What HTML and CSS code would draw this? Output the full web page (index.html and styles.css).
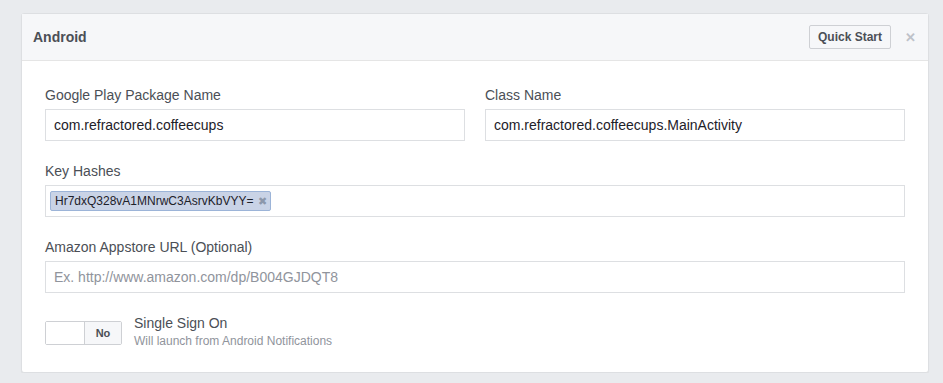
FILE: index.html
```html
<!DOCTYPE html>
<html lang="en">
<head>
  <meta charset="UTF-8" />
  <title>Android Settings</title>
  <link rel="stylesheet" href="styles.css">
</head>
<body>

  <div class="panel">
    <!-- Panel header -->
    <div class="panel-head">
      <h2>Android</h2>
      <div class="head-actions">
        <button class="btn">Quick Start</button>
        <span class="close">&#x2715;</span>
      </div>
    </div>

    <div class="panel-body">
      <div class="row two-col">
        <div class="field">
          <label>Google Play Package Name</label>
          <input type="text" value="com.refractored.coffeecups" />
        </div>
        <div class="field">
          <label>Class Name</label>
          <input type="text" value="com.refractored.coffeecups.MainActivity" />
        </div>
      </div>

      <div class="row field">
        <label>Key Hashes</label>
        <div class="tag-box">
          <span class="tag">Hr7dxQ328vA1MNrwC3AsrvKbVYY= <span class="tag-x">&#x2716;</span></span>
        </div>
      </div>

      <div class="row field">
        <label>Amazon Appstore URL (Optional)</label>
        <input type="text" placeholder="Ex. http://www.amazon.com/dp/B004GJDQT8" />
      </div>

      <div class="sso">
        <div class="toggle">
          <span class="toggle-off"></span>
          <span class="toggle-label">No</span>
        </div>
        <div class="sso-text">
          <div class="sso-title">Single Sign On</div>
          <div class="sso-sub">Will launch from Android Notifications</div>
        </div>
      </div>
    </div>
  </div>

</body>
</html>
```

FILE: styles.css
```css
body {
  margin: 0;
  font-family: Arial, "Liberation Sans", sans-serif;
  background: #e9ebee;
  padding: 13px 13px 0 21px;
}

.panel {
  width: 908px;
  background: white;
  border: 1px solid #dddfe2;
  border-radius: 3px;
  box-shadow: 0 1px 1px rgba(0, 0, 0, 0.05);
  box-sizing: border-box;
}

/* Header */
.panel-head {
  display: flex;
  justify-content: space-between;
  align-items: center;
  height: 46px;
  padding: 0 12px 0 11px;
  background: #f6f7f9;
  border-bottom: 1px solid #e5e5e5;
}

.panel-head h2 {
  margin: 0 0 1px;
  font-size: 14px;
  font-weight: bold;
  color: #4b4f56;
}

.head-actions {
  display: flex;
  align-items: center;
  gap: 14px;
}

.btn {
  font-family: inherit;
  font-size: 12px;
  font-weight: bold;
  color: #4b4f56;
  background: #f6f7f9;
  border: 1px solid #ced0d4;
  border-radius: 2px;
  height: 24px;
  padding: 0 8px;
}

.close {
  color: #bec2c9;
  font-size: 13px;
  font-weight: bold;
}

/* Body */
.panel-body {
  padding: 25px 23px 24px 23px;
}

.row {
  margin-bottom: 21px;
}

.two-col {
  display: grid;
  grid-template-columns: 1fr 1fr;
  gap: 20px;
}

.field label {
  display: block;
  font-size: 14px;
  line-height: 18px;
  color: #4b4f56;
  margin-bottom: 5px;
}

.field input,
.tag-box {
  width: 100%;
  height: 32px;
  box-sizing: border-box;
  border: 1px solid #dddfe2;
  padding: 0 8px;
  font-family: inherit;
  font-size: 14px;
  color: #1d2129;
}

.field input::placeholder {
  color: #90949c;
}

.tag-box {
  display: flex;
  align-items: center;
  padding: 0 4px;
}

.tag {
  background: #c9d3e6;
  border: 1px solid #9cb4d8;
  border-radius: 2px;
  font-size: 12px;
  color: #1d2129;
  height: 20px;
  line-height: 18px;
  padding: 0 3px 0 4px;
  box-sizing: border-box;
}

.tag-x {
  color: #8d98ab;
  font-size: 11px;
  margin-left: 1px;
}

/* Single sign on */
.sso {
  display: flex;
  align-items: flex-start;
  gap: 12px;
  margin-top: 28px;
}

.toggle {
  display: flex;
  width: 77px;
  height: 24px;
  box-sizing: border-box;
  border: 1px solid #ced0d4;
  border-radius: 2px;
}

.toggle-off {
  width: 38px;
  background: white;
  border-right: 1px solid #ced0d4;
}

.toggle-label {
  flex: 1;
  background: #f6f7f9;
  font-size: 11px;
  font-weight: bold;
  color: #4b4f56;
  text-align: center;
  line-height: 22px;
}

.sso-title {
  font-size: 14px;
  color: #4b4f56;
  line-height: 16px;
  margin-top: -6px;
}

.sso-sub {
  font-size: 12px;
  color: #90949c;
  line-height: 14px;
  margin-top: 3px;
}
```
